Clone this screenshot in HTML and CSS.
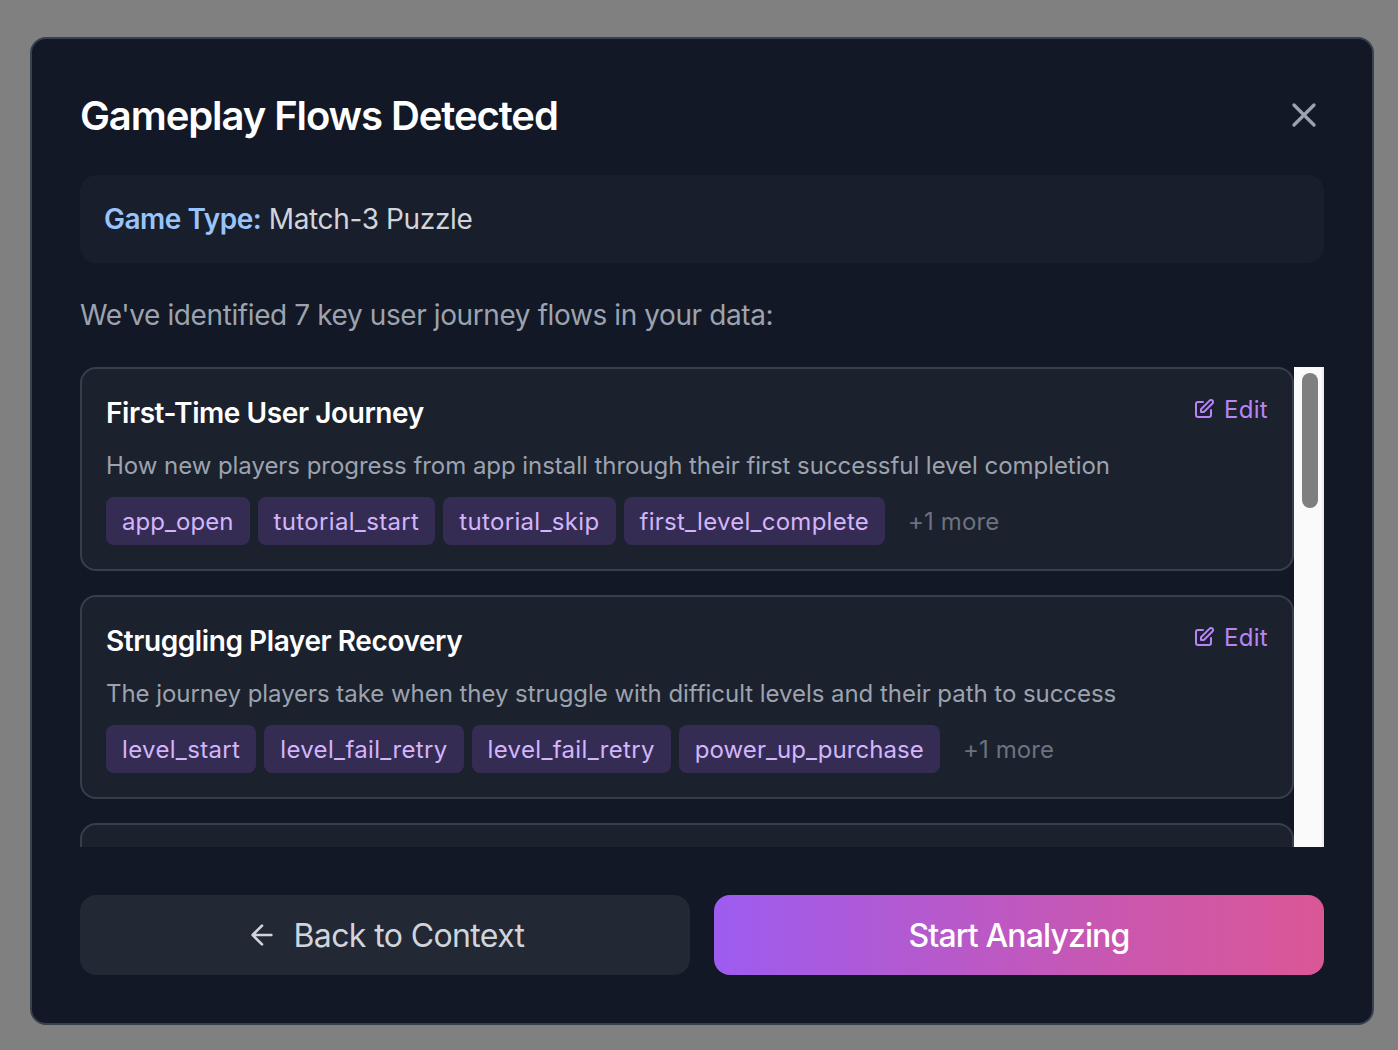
FILE: index.html
```html
<!DOCTYPE html>
<html lang="en">
<head>
<meta charset="utf-8">
<title>Gameplay Flows Detected</title>
<link rel="stylesheet" href="styles.css">
</head>
<body>
<svg class="sprite" aria-hidden="true">
  <symbol id="pen" viewBox="0 0 24 24"><path d="M11 5H6a2 2 0 00-2 2v11a2 2 0 002 2h11a2 2 0 002-2v-5m-1.414-9.414a2 2 0 112.828 2.828L11.828 15H9v-2.828l8.586-8.586z"/></symbol>
</svg>
<main class="dialog" role="dialog" aria-labelledby="title">
  <header class="header">
    <h1 class="title" id="title">Gameplay Flows Detected</h1>
    <button class="close" aria-label="Close"><svg class="icon-close" viewBox="0 0 24 24"><path d="M18 6 6 18M6 6l12 12"/></svg></button>
  </header>
  <div class="game-type"><span class="label">Game Type:</span> <span class="value">Match-3 Puzzle</span></div>
  <p class="intro">We've identified 7 key user journey flows in your data:</p>
  <div class="scroller">
    <div class="flows">
      <article class="card">
        <div class="card-top">
          <h2 class="name">First-Time User Journey</h2>
          <button class="edit"><svg class="icon-edit"><use href="#pen"/></svg><span>Edit</span></button>
        </div>
        <p class="description">How new players progress from app install through their first successful level completion</p>
        <div class="tags">
          <span class="tag tag-tight">app_open</span><span class="tag">tutorial_start</span><span class="tag">tutorial_skip</span><span class="tag tag-long">first_level_complete</span><span class="more">+1 more</span>
        </div>
      </article>
      <article class="card">
        <div class="card-top">
          <h2 class="name">Struggling Player Recovery</h2>
          <button class="edit"><svg class="icon-edit"><use href="#pen"/></svg><span>Edit</span></button>
        </div>
        <p class="description">The journey players take when they struggle with difficult levels and their path to success</p>
        <div class="tags">
          <span class="tag">level_start</span><span class="tag">level_fail_retry</span><span class="tag">level_fail_retry</span><span class="tag tag-tight">power_up_purchase</span><span class="more">+1 more</span>
        </div>
      </article>
      <article class="card card-next"></article>
    </div>
    <div class="scrollbar"><div class="thumb"></div></div>
  </div>
  <footer class="actions">
    <button class="button back"><svg class="icon-arrow" viewBox="0 0 24 24"><path d="m12 19-7-7 7-7M19 12H5"/></svg><span>Back to Context</span></button>
    <button class="button start"><span>Start Analyzing</span></button>
  </footer>
</main>
</body>
</html>
```
FILE: styles.css
```css
* { box-sizing: border-box; }
body {
  margin: 0;
  height: 1050px;
  padding: 37px 24px 25px 30px;
  overflow: hidden;
  background: #808080;
  font-family: Inter, "Liberation Sans", sans-serif;
  color: #d1d5db;
}
h1, h2, p { margin: 0; }
button { border: 0; padding: 0; background: none; font: inherit; color: inherit; }
svg { fill: none; stroke: currentColor; stroke-width: 2; stroke-linecap: round; stroke-linejoin: round; flex: none; display: block; }
.sprite { position: absolute; width: 0; height: 0; }
.dialog {
  height: 988px;
  padding: 48px;
  border: 2px solid #384150;
  border-radius: 16px;
  background: #121825;
}
.header { display: flex; align-items: center; justify-content: space-between; height: 56px; margin-bottom: 32px; }
.title { padding-top: 2px; font-size: 40px; line-height: 56px; font-weight: 600; letter-spacing: -1.09px; color: #fff; }
.close { color: #9ca3af; }
.icon-close { width: 40px; height: 40px; }
.game-type { height: 88px; padding: 24px; margin-bottom: 32px; border-radius: 16px; background: #181e2b; font-size: 28px; line-height: 40px; letter-spacing: -.36px; }
.label { font-weight: 600; letter-spacing: -.48px; color: #99c4fa; }
.intro { font-size: 28px; line-height: 40px; margin-bottom: 32px; color: #9ca3af; letter-spacing: -.4px; }
.scroller { display: flex; height: 480px; overflow: hidden; margin-bottom: 48px; }
.flows { flex: 1; display: flex; flex-direction: column; gap: 24px; }
.card { flex: none; height: 204px; padding: 24px; border: 2px solid #383f4c; border-radius: 16px; background: #1b212d; }
.card-top { display: flex; justify-content: space-between; height: 56px; }
.name { font-size: 28px; line-height: 40px; font-weight: 600; color: #fff; letter-spacing: -.42px; }
.edit { display: flex; align-items: center; gap: 8px; height: 32px; color: #b785f6; font-size: 24px; line-height: 32px; letter-spacing: .3px; }
.edit span { padding-top: 2px; }
.icon-edit { width: 24px; height: 24px; }
.description { padding-top: 1px; font-size: 24px; line-height: 32px; margin-bottom: 15px; color: #9ca3af; white-space: nowrap; letter-spacing: -.045px; }
.tags { display: flex; gap: 8px; font-size: 24px; line-height: 32px; }
.tag { padding: 9px 16px 7px; border-radius: 8px; background: #352c54; color: #d3b5fb; letter-spacing: .34px; }
.tag-tight { letter-spacing: .06px; }
.tag-long { letter-spacing: .26px; }
.more { padding: 9px 15px 7px; color: #6b7280; letter-spacing: .12px; }
.scrollbar { width: 30px; padding: 6px 6px 0 8px; background: #fafafa; border-right: 2px solid #ededed; }
.thumb { width: 16px; height: 135px; border-radius: 8px; background: #7f7f7f; }
.actions { display: grid; grid-template-columns: 1fr 1fr; gap: 24px; }
.button { height: 80px; border-radius: 16px; display: flex; align-items: center; justify-content: center; gap: 16px; font-size: 32px; line-height: 48px; letter-spacing: -.62px; }
.button span { padding-top: 2px; }
.back { background: #222834; color: #d1d5db; }
.icon-arrow { width: 32px; height: 32px; }
.start { background: linear-gradient(90deg, #9d5cf0, #cb57ae 68%, #db5796); color: #fff; font-weight: 500; letter-spacing: -.88px; }
```
